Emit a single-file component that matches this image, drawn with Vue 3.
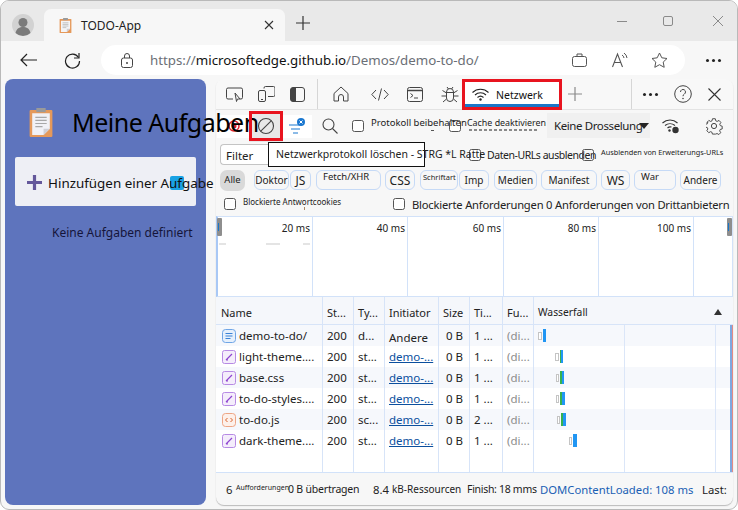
<script setup>
const chips = [
  { t: 'Doktor', w: 35, ml: 9 },
  { t: 'JS', w: 21, ml: 1, big: true },
  { t: 'Fetch/XHR', w: 65, ml: 5, top: true },
  { t: 'CSS', w: 30, ml: 4, big: true },
  { t: 'Schriftart', w: 38, ml: 5, top: true, tiny: true },
  { t: 'Imp', w: 30, ml: 1 },
  { t: 'Medien', w: 43, ml: 5 },
  { t: 'Manifest', w: 56, ml: 4 },
  { t: 'WS', w: 29, ml: 4, big: true },
  { t: 'War', w: 42, ml: 4, top: true },
  { t: 'Andere', w: 41, ml: 4 }
]
const ticks = [
  { t: '20 ms', w: 95 },
  { t: '40 ms', w: 95 },
  { t: '60 ms', w: 96 },
  { t: '80 ms', w: 95 },
  { t: '100 ms', w: 95 }
]
const rows = [
  { n: 'demo-to-do/', i: 'doc', ty: 'd...', init: 'Andere', ti: '1 ...', o: 4, b: 4, g: 1, gr: 0, bl: 3 },
  { n: 'light-theme....', i: 'css', ty: 'st...', init: 'demo-...', ti: '1 ...', o: 21, b: 4, g: 1, gr: 1, bl: 2 },
  { n: 'base.css', i: 'css', ty: 'st...', init: 'demo-...', ti: '1 ...', o: 22, b: 3, g: 1, gr: 2, bl: 2 },
  { n: 'to-do-styles....', i: 'css', ty: 'st...', init: 'demo-...', ti: '1 ...', o: 22, b: 3, g: 1, gr: 2, bl: 3 },
  { n: 'to-do.js', i: 'js', ty: 'sc...', init: 'demo-...', ti: '2 ...', o: 23, b: 3, g: 1, gr: 2, bl: 3 },
  { n: 'dark-theme....', i: 'css', ty: 'st...', init: 'demo-...', ti: '1 ...', o: 35, b: 3, g: 1, gr: 0, bl: 4 }
]
</script>

<template>
  <div class="window">
    <header class="titlebar">
      <div class="avatar">
        <svg width="22" height="22" viewBox="0 0 22 22"><circle cx="11" cy="11" r="11" fill="#d2d2d2"/><circle cx="11" cy="8.5" r="4.5" fill="#7b7b7b"/><path d="M3.5 19c1-4.5 4-6 7.5-6s6.500 1.500 7.500 6a11 11 0 0 1-15 0z" fill="#7b7b7b"/></svg>
      </div>
      <div class="tab">
        <svg class="tab-ico" width="13" height="15" viewBox="0 0 23 28"><rect x="0.500" y="2" width="22" height="26" rx="1" fill="#e5995a"/><path d="M3 5h17v15l-6 6H3z" fill="#f4f4f6"/><path d="M14 26v-6h6z" fill="#cfcfd6"/><rect x="7" y="0" width="9" height="4" fill="#9a9a9a"/><path d="M6 9h11M6 12h11M6 15h11M6 18h7" stroke="#a8a8a8" stroke-width="1.200"/></svg>
        <span class="tab-title">TODO-App</span>
        <svg class="tab-x" width="10" height="10" viewBox="0 0 10 10"><path d="M1 1l8 8M9 1l-8 8" stroke="#333" stroke-width="1.100"/></svg>
      </div>
      <svg class="newtab" width="14" height="14" viewBox="0 0 14 14"><path d="M7 0v14M0 7h14" stroke="#333" stroke-width="1.200"/></svg>
      <div class="winctl">
        <svg width="10" height="10" viewBox="0 0 10 10"><path d="M0 5.500h10" stroke="#8a8a8a"/></svg>
        <svg width="10" height="10" viewBox="0 0 10 10"><rect x="0.500" y="0.500" width="9" height="9" rx="1.500" fill="none" stroke="#8a8a8a"/></svg>
        <svg width="10" height="10" viewBox="0 0 10 10"><path d="M0 0l10 10M10 0L0 10" stroke="#8a8a8a"/></svg>
      </div>
    </header>

    <nav class="toolbar">
      <svg class="back" width="17" height="14" viewBox="0 0 17 14"><path d="M17 7H1M7 1L1 7l6 6" fill="none" stroke="#222" stroke-width="1.200"/></svg>
      <svg class="reload" width="17" height="17" viewBox="0 0 17 17"><path d="M14.500 5.500A7 7 0 1 0 15.500 9" fill="none" stroke="#222" stroke-width="1.200"/><path d="M15 1v5h-5" fill="none" stroke="#222" stroke-width="1.200"/></svg>
      <div class="address">
        <svg class="lock" width="12" height="15" viewBox="0 0 12 15"><rect x="0.500" y="5" width="11" height="9.500" rx="2" fill="none" stroke="#444"/><path d="M3.500 5V3a2.500 2.500 0 0 1 5 0v2" fill="none" stroke="#444"/><circle cx="6" cy="10" r="1" fill="#444"/></svg>
        <span class="url"><span class="dim">https://</span>microsoftedge.github.io<span class="dim">/Demos/demo-to-do/</span></span>
        <svg class="a1" width="15" height="14" viewBox="0 0 15 14"><rect x="0.500" y="3.500" width="14" height="10" rx="2" fill="none" stroke="#555"/><path d="M5 3.500V1h5v2.500" fill="none" stroke="#555"/></svg>
        <svg class="a2" width="17" height="16" viewBox="0 0 17 16"><path d="M0.500 15L5.500 2l5 13M2.500 10.500h6" fill="none" stroke="#555" stroke-width="1.100"/><path d="M10 3a4 4 0 0 1 2 3M12 1a7 7 0 0 1 3 5" fill="none" stroke="#555"/></svg>
        <svg class="a3" width="17" height="16" viewBox="0 0 17 16"><path d="M8.500 1l2.300 4.800 5.200.7-3.800 3.600 1 5.200-4.700-2.600-4.700 2.600 1-5.200L1 6.500l5.200-.7z" fill="none" stroke="#555"/></svg>
      </div>
      <div class="dots"><i></i><i></i><i></i></div>
    </nav>

    <main class="stage">
      <section class="app">
        <div class="app-head">
          <svg width="24" height="29" viewBox="0 0 23 28"><rect x="0.500" y="2" width="22" height="26" rx="1" fill="#e5995a"/><path d="M3 5h17v15l-6 6H3z" fill="#f1f1f6"/><path d="M14 26v-6h6z" fill="#cfcfd6"/><rect x="7" y="0" width="9" height="4" fill="#9a9a9a"/><path d="M6 9h11M6 12h11M6 15h11M6 18h7" stroke="#a8a8a8" stroke-width="1.100"/></svg>
          <h1>Meine Aufgaben</h1>
        </div>
        <div class="add">
          <svg width="15" height="15" viewBox="0 0 15 15"><path d="M7.500 0v15M0 7.500h15" stroke="#64589b" stroke-width="3.200"/></svg>
          <span class="add-text">Hinzufügen einer Aufgabe</span>
          <span class="add-sq"></span>
        </div>
        <p class="none">Keine Aufgaben definiert</p>
      </section>

      <section class="dev">
        <div class="tabs">
          <svg class="t1" width="17" height="15" viewBox="0 0 17 15"><path d="M7 12H2a1.500 1.500 0 0 1-1.500-1.500v-8A1.500 1.500 0 0 1 2 1h13a1.500 1.500 0 0 1 1.500 1.500v8A1.500 1.500 0 0 1 15 12h-1" fill="none" stroke="#444"/><path d="M9 6l5 6-2.500 0-1 2.500z" fill="none" stroke="#444"/></svg>
          <svg class="t2" width="17" height="16" viewBox="0 0 17 16"><path d="M6 2.500V2a1.500 1.500 0 0 1 1.500-1.500h8A1.500 1.500 0 0 1 17 2v7a1.500 1.500 0 0 1-1.500 1.500H10" fill="none" stroke="#444"/><rect x="0.500" y="4.500" width="7" height="11" rx="1.500" fill="none" stroke="#444"/><path d="M3 13.500h2" stroke="#444"/></svg>
          <svg class="t3" width="15" height="15" viewBox="0 0 15 15"><rect x="0.500" y="0.500" width="14" height="14" rx="2.500" fill="none" stroke="#444"/><path d="M3 0.500h3v14H3a2.500 2.500 0 0 1-2.500-2.500V3A2.500 2.500 0 0 1 3 0.500z" fill="#444"/></svg>
          <span class="vsep s1"></span>
          <svg class="t4" width="16" height="16" viewBox="0 0 16 16"><path d="M1 7.500L8 1l7 6.500V15h-4.500v-4a2.500 2.500 0 0 0-5 0v4H1z" fill="none" stroke="#444" stroke-linejoin="round"/></svg>
          <svg class="t5" width="18" height="13" viewBox="0 0 18 13"><path d="M5 2L0.800 6.500 5 11M13 2l4.200 4.500L13 11M10.500 0.500l-3 12" fill="none" stroke="#444"/></svg>
          <svg class="t6" width="16" height="15" viewBox="0 0 16 15"><rect x="0.500" y="0.500" width="15" height="14" rx="2" fill="none" stroke="#444"/><path d="M0.500 3.500h15" stroke="#444" stroke-width="1.500"/><path d="M3.500 6.500l2.500 2-2.500 2M7 11h4" fill="none" stroke="#444"/></svg>
          <svg class="t7" width="18" height="17" viewBox="0 0 18 17"><path d="M5.500 6a3.500 3.500 0 0 1 7 0v6a3.500 3.500 0 0 1-7 0zM6 1l1.500 2M12 1l-1.500 2M5.500 7L1.500 4.500M12.500 7l4-2.500M5.500 10H0.500M12.500 10h5M5.500 13l-3.500 3M12.500 13l3.500 3M5.500 6.500h7" fill="none" stroke="#444"/></svg>
          <div class="net-tab">
            <svg width="17" height="13" viewBox="0 0 17 13"><path d="M0.500 4.500a11.500 11.500 0 0 1 16 0M3 7a8 8 0 0 1 11 0M5.500 9.500a4.500 4.500 0 0 1 6 0" fill="none" stroke="#222" stroke-width="1.100"/><circle cx="8.500" cy="11.500" r="1.200" fill="#222"/></svg>
            <span>Netzwerk</span>
          </div>
          <svg class="t8" width="14" height="14" viewBox="0 0 14 14"><path d="M7 0v14M0 7h14" stroke="#8a8a8a" stroke-width="1.200"/></svg>
          <span class="vsep s2"></span>
          <div class="dots small"><i></i><i></i><i></i></div>
          <svg class="t9" width="18" height="18" viewBox="0 0 18 18"><circle cx="9" cy="9" r="8.300" fill="none" stroke="#444"/><path d="M6.500 7a2.500 2.500 0 1 1 3.800 2.100c-.9.600-1.300 1-1.300 2.100" fill="none" stroke="#444"/><circle cx="9" cy="13.500" r=".8" fill="#444"/></svg>
          <svg class="t10" width="13" height="13" viewBox="0 0 13 13"><path d="M0.500 0.500l12 12M12.500 0.500l-12 12" stroke="#333" stroke-width="1.100"/></svg>
        </div>

        <div class="tools">
          <div class="tool-white">
            <svg class="rec" width="12" height="12" viewBox="0 0 12 12"><circle cx="6" cy="6" r="5" fill="#fff" stroke="#e0232e" stroke-width="1.500"/><circle cx="6" cy="6" r="2.500" fill="#e0232e"/></svg>
            <div class="clear">
              <svg width="18" height="18" viewBox="0 0 18 18"><circle cx="9" cy="9" r="7.500" fill="none" stroke="#444" stroke-width="1.100"/><path d="M3.800 14.200L14.200 3.800" stroke="#444" stroke-width="1.100"/></svg>
            </div>
            <svg class="filt" width="20" height="17" viewBox="0 0 20 17"><path d="M1 7h13M3 11h9M5 15h5" stroke="#1b78d0" stroke-width="1.200"/><circle cx="13" cy="4" r="4" fill="#1b78d0"/><path d="M11.500 2.500l3 3M14.500 2.500l-3 3" stroke="#fff"/></svg>
          </div>
          <svg class="srch" width="16" height="16" viewBox="0 0 16 16"><circle cx="6.500" cy="6.500" r="5.500" fill="none" stroke="#444" stroke-width="1.100"/><path d="M10.500 10.500L15.500 15.500" stroke="#444" stroke-width="1.100"/></svg>
          <span class="cb c1"></span>
          <span class="mini lab1">Protokoll beibehalten<i class="tickmark"></i></span>
          <span class="cb c2"></span>
          <span class="lab2"><b>Cache deaktivieren</b></span>
          <div class="throttle"><span>Keine Drosselung</span><i class="caret"></i></div>
          <svg class="wset" width="18" height="16" viewBox="0 0 18 16"><path d="M0.500 5a11 11 0 0 1 15 0M3 7.500a8 8 0 0 1 10 0M5.500 10a4.500 4.500 0 0 1 4 -1" fill="none" stroke="#333" stroke-width="1.100"/><circle cx="7.500" cy="12.500" r="1.200" fill="#333"/><circle cx="13.500" cy="12" r="3.200" fill="#333"/></svg>
          <svg class="gear" width="17" height="17" viewBox="0 0 17 17"><path d="M7 .8h3l.5 2.200 1.500.7 2-1.100 2 2.200-1.200 1.900.6 1.500 2 .6v3l-2.100.5-.6 1.500 1.100 2-2 2-1.900-1.100-1.500.6-.5 0h-3l-.5-2-1.500-.6-1.900 1.100-2.100-2.100 1.100-1.900-.6-1.500-2.100-.5v-3l2.100-.6.600-1.500L1 4.800l2.100-2.200 1.900 1.100 1.500-.7z" transform="scale(.93)" fill="none" stroke="#444"/><circle cx="8" cy="8" r="2.600" fill="none" stroke="#444"/></svg>
        </div>

        <div class="filters">
          <div class="finput">Filter</div>
          <span class="cb c3"></span>
          <span class="lab3">Daten-URLs ausblenden</span>
          <span class="cb c4"></span>
          <span class="lab4">Ausblenden von Erweiterungs-URLs</span>
        </div>

        <div class="chips">
          <span class="all">Alle</span>
          <span
            v-for="c in chips"
            :key="c.t"
            class="chip"
            :class="{ big: c.big, top: c.top, tiny: c.tiny }"
            :style="{ width: c.w + 'px', marginLeft: c.ml + 'px' }"
          >{{ c.t }}</span>
        </div>

        <div class="blocks">
          <span class="cb c5"></span>
          <span class="lab5">Blockierte Antwortcookies<i class="tickmark t-b"></i></span>
          <span class="cb c6"></span>
          <span class="lab6">Blockierte Anforderungen 0 Anforderungen von Drittanbietern</span>
        </div>

        <div class="overview">
          <div v-for="t in ticks" :key="t.t" class="tick" :style="{ width: t.w + 'px' }">{{ t.t }}</div>
          <span class="handle hl"></span>
          <span class="handle hr"></span>
          <span class="dash d1"></span>
          <span class="dash d2"></span>
          <span class="dash d3"></span>
        </div>

        <div class="table">
          <div class="grid head">
            <div>Name</div><div>St...</div><div>Ty...</div><div>Initiator</div><div>Size</div><div>Ti...</div><div>Fu...</div>
            <div class="wfh"><span>Wasserfall</span><i class="up"></i></div>
          </div>
          <div class="grid row" v-for="(r, i) in rows" :key="r.n" :class="{ odd: i % 2 === 0 }">
            <div class="namecell">
              <svg v-if="r.i === 'doc'" width="14" height="14" viewBox="0 0 14 14"><rect x="0.500" y="0.500" width="13" height="13" rx="3" fill="#e6f0fc" stroke="#6fa5e6"/><path d="M3.500 4.500h7M3.500 7h7M3.500 9.500h5" stroke="#3b82d6"/></svg>
              <svg v-else-if="r.i === 'css'" width="14" height="14" viewBox="0 0 14 14"><rect x="0.500" y="0.500" width="13" height="13" rx="2" fill="#f4edfb" stroke="#b78ae4"/><path d="M4 10L10 4M4 10h2" stroke="#8e44d0" stroke-width="1.200"/></svg>
              <svg v-else width="14" height="14" viewBox="0 0 14 14"><rect x="0.500" y="0.500" width="13" height="13" rx="3" fill="#fdf0ea" stroke="#eda585"/><path d="M5.500 5L3.500 7l2 2M8.500 5l2 2-2 2" fill="none" stroke="#d9622b"/></svg>
              <span>{{ r.n }}</span>
            </div>
            <div>200</div>
            <div>{{ r.ty }}</div>
            <div :class="r.init === 'Andere' ? 'other' : 'link'">{{ r.init }}</div>
            <div class="size">0 B</div>
            <div>{{ r.ti }}</div>
            <div class="gray">(di...</div>
            <div class="wf" :style="{ paddingLeft: r.o + 'px' }">
              <i class="b-box" :style="{ width: r.b + 'px' }"></i>
              <i class="b-gap" :style="{ width: r.g + 'px' }"></i>
              <i class="b-green" :style="{ width: r.gr + 'px' }"></i>
              <i class="b-blue" :style="{ width: r.bl + 'px' }"></i>
            </div>
          </div>
          <div class="grid filler">
            <div></div><div></div><div></div><div></div><div></div><div></div><div></div><div class="wf"></div>
          </div>
          <span class="edge"></span>
        </div>

        <footer class="status">
          <span class="s-6">6</span>
          <span class="s-auf">Aufforderungen</span>
          <span class="s-b">0 B übertragen</span>
          <span class="s-84">8.4</span>
          <span class="s-kb">kB-Ressourcen</span>
          <span class="s-fin">Finish: 18 mms</span>
          <span class="s-dom">DOMContentLoaded: 108 ms</span>
          <span class="s-last">Last:</span>
        </footer>

        <div class="tooltip">Netzwerkprotokoll löschen - STRG *L Ratte</div>
        <span class="redbox"></span>
      </section>
    </main>
  </div>
</template>

<style scoped>
* { box-sizing: border-box; }
svg { flex: none; }
.window {
  width: 738px; height: 510px; position: relative; overflow: hidden;
  display: flex; flex-direction: column;
  background: #f7f7f7; border: 1px solid #b9b9b9; border-radius: 9px;
  font-family: "Noto Sans", "Liberation Sans", sans-serif; color: #1b1b1b;
}
.titlebar { height: 40px; flex: none; background: #e9e9e9; display: flex; align-items: flex-end; position: relative; }
.avatar { position: absolute; left: 11px; top: 13px; width: 22px; height: 22px; }
.tab {
  margin-left: 43px; width: 241px; height: 32px; background: #f7f7f7;
  border-radius: 7px 7px 0 0; display: flex; align-items: center;
}
.tab-ico { margin-left: 15px; }
.tab-title { margin-left: 9px; font-size: 12px; color: #222; }
.tab-x { margin-left: auto; margin-right: 11px; }
.newtab { margin: 0 0 11px 11px; }
.winctl { margin-left: auto; display: flex; gap: 36px; padding-right: 14px; height: 100%; align-items: center; margin-top: -12px; }
.winctl svg + svg + svg { margin-left: 4px; }

.toolbar { height: 38px; flex: none; display: flex; align-items: center; }
.back { margin-left: 19px; }
.reload { margin-left: 27px; }
.address {
  margin-left: 20px; width: 584px; height: 30px; border-radius: 15px; background: #fff;
  display: flex; align-items: center;
}
.lock { margin-left: 20px; }
.url { font-size: 13.300px; color: #111; white-space: nowrap; width: 340px; flex: none; margin-left: 17px; }
.dim { color: #6b6f76; }
.a1 { margin-left: 82px; }
.a2 { margin-left: 25px; }
.a3 { margin-left: 22px; }
.dots { display: flex; gap: 3px; margin-left: 21px; }
.dots i { width: 3px; height: 3px; border-radius: 50%; background: #222; }

.stage { flex: 1; display: flex; gap: 10px; padding: 0 4px 4px 4px; min-height: 0; }
.app {
  width: 201px; flex: none; background: #5e74bd; border-radius: 8px; position: relative; z-index: 3;
  padding: 28px 10px 0;
}
.app-head { display: flex; align-items: center; height: 30px; padding-left: 14px; white-space: nowrap; }
.app-head h1 { margin: 0 0 0 19px; font-size: 25px; font-weight: 400; color: #000; letter-spacing: -0.5px; }
.add {
  margin-top: 20px; height: 49px; background: #eeeff5; border-radius: 2px; position: relative;
  display: flex; align-items: center; padding: 2px 0 0 12px; white-space: nowrap;
}
.add-text { margin-left: 6px; font-size: 13.400px; color: #111; position: relative; z-index: 1; }
.add-sq { position: absolute; left: 155px; top: 19px; width: 14px; height: 14px; background: #19a2e4; border-radius: 2px; }
.none { margin: 18px 0 0 37px; font-size: 12px; color: #15153a; white-space: nowrap; }

.dev { width: 517px; flex: none; background: #f7f7f7; border-radius: 8px; position: relative; display: flex; flex-direction: column; box-shadow: 0 1px 1px #bbb; }
.tabs { height: 31px; flex: none; display: flex; align-items: center; border-bottom: 1px solid #e3e3e3; position: relative; background: #f8f8f8; border-radius: 8px 8px 0 0; }
.t1 { margin-left: 10px; }
.t2 { margin-left: 15px; }
.t3 { margin-left: 15px; }
.vsep { width: 1px; height: 100%; background: #d6d6d6; }
.s1 { margin-left: 12px; }
.t4 { margin-left: 15px; }
.t5 { margin-left: 22px; }
.t6 { margin-left: 18px; }
.t7 { margin-left: 18px; }
.net-tab {
  margin-left: 3px; width: 100px; height: 31px; flex: none; background: #fff;
  display: flex; align-items: center; padding: 1px 0 0 7px; position: relative;
  border: 3px solid #e8141f;
}
.net-tab span { margin-left: 7px; font-size: 10.500px; color: #111; }
.net-tab::after { content: ""; position: absolute; left: 0; right: 0; bottom: 0; height: 3px; background: #1b76c8; }
.t8 { margin-left: 6px; }
.s2 { margin-left: 49px; }
.dots.small { margin-left: 11px; }
.t9 { margin-left: 16px; }
.t10 { margin-left: 16px; }

.tools { height: 32px; flex: none; display: flex; align-items: center; position: relative; }
.tool-white { margin-left: 1px; width: 95px; height: 23px; background: #fff; display: flex; align-items: center; flex: none; }
.rec { margin-left: 11px; }
.clear { margin-left: 9px; width: 34px; height: 31px; flex: none; background: #e8e8e8; display: flex; align-items: center; justify-content: center; }
.filt { margin-left: 5px; }
.srch { margin-left: 10px; }
.cb { display: block; flex: none; width: 12px; height: 12px; border: 1px solid #555; border-radius: 2.500px; background: #fff; }
.c1 { margin-left: 14px; }
.mini { font-size: 9.500px; white-space: nowrap; }
.lab1 { margin-left: 7px; width: 78px; margin-top: -7px; position: relative; color: #222; }
.tickmark { position: absolute; left: 60px; top: 14px; width: 3px; height: 1px; background: #555; }
.c2 { margin-left: 0; }
.lab2 { margin-left: 6px; width: 80px; height: 20px; position: relative; font-size: 8.900px; white-space: nowrap; flex: none; }
.lab2::after { content: ""; position: absolute; left: 2px; right: 8px; top: 13px; height: 2px; background: repeating-linear-gradient(90deg, #8a8a8a 0 3px, transparent 3px 5px); }
.lab2 b { font-weight: 400; display: block; line-height: 13px; color: #222; }
.throttle { width: 103px; height: 25px; background: #f0f0f0; display: flex; align-items: center; padding-left: 7px; position: relative; flex: none; white-space: nowrap; font-size: 11.500px; letter-spacing: -0.400px; color: #222; margin-top: -1px; }
.caret { position: absolute; left: 92px; top: 10px; width: 0; height: 0; border-left: 5px solid transparent; border-right: 5px solid transparent; border-top: 6px solid #222; }
.wset { margin-left: 12px; }
.gear { margin-left: 26px; }

.filters { height: 25px; flex: none; display: flex; align-items: center; position: relative; white-space: nowrap; }
.finput { margin-left: 4px; width: 60px; height: 21px; background: #fff; border: 1px solid #c4c4c4; border-radius: 4px 0 0 4px; border-right: 0; font-size: 11.500px; padding-left: 5px; line-height: 21px; color: #222; flex: none; }
.c3 { margin-left: 189px; }
.lab3 { margin-left: 6px; font-size: 10.500px; letter-spacing: -0.450px; width: 95px; flex: none; color: #222; }
.c4 { margin-left: 0; position: relative; background: transparent; }
.lab4 { margin-left: 7px; font-size: 7.300px; margin-top: -5px; color: #222; }

.chips { height: 25px; flex: none; display: flex; align-items: flex-start; padding-top: 3px; white-space: nowrap; }
.all { margin-left: 4px; width: 25px; height: 21px; background: #d9d9d9; border-radius: 7px; font-size: 9.500px; text-align: center; line-height: 20px; color: #222; flex: none; }
.chip { height: 20px; border: 1px solid #c6daf6; border-radius: 6px; font-size: 10px; text-align: center; line-height: 18px; flex: none; color: #222; overflow: hidden; }
.chip.big { font-size: 12px; line-height: 20px; }
.chip.top { line-height: 12px; font-size: 9.500px; text-align: left; padding-left: 6px; }
.chip.tiny { font-size: 7.500px; padding-left: 2px; }

.blocks { height: 24px; flex: none; display: flex; align-items: center; white-space: nowrap; }
.c5 { margin-left: 8px; }
.lab5 { margin-left: 7px; width: 150px; flex: none; font-size: 8px; margin-top: -5px; position: relative; color: #222; }
.t-b { left: 61px; top: 11px; width: 1px; height: 3px; background: #a86; }
.c6 { margin-left: 0; }
.lab6 { margin-left: 7px; font-size: 11.200px; letter-spacing: -0.200px; color: #222; }

.overview { height: 81px; flex: none; background: #fff; border: 1px solid #d2e2f9; border-left: 2px solid #a9c8f5; display: flex; position: relative; }
.tick { height: 100%; border-right: 1px solid #d2e2f9; text-align: right; padding: 4px 2px 0 0; font-size: 10px; color: #222; flex: none; white-space: nowrap; }
.handle { position: absolute; top: 1px; width: 5px; height: 18px; background: #8e8e8e; border-radius: 1px; }
.handle::after { content: ""; position: absolute; left: 1px; top: 5px; width: 1px; height: 8px; background: #1b76c8; }
.hl { left: -1px; }
.hr { right: 0; }
.dash { position: absolute; top: 26px; height: 2px; background: #e4e4e4; }
.d1 { left: 1px; width: 7px; }
.d2 { left: 48px; width: 14px; }
.d3 { left: 85px; width: 7px; }

.table { flex: 1; min-height: 0; display: flex; flex-direction: column; position: relative; background: #fff; border-bottom: 1px solid #d2e2f9; }
.grid { display: grid; grid-template-columns: 107px 31px 31px 54px 31px 33px 31px 1fr; font-size: 11.500px; }
.grid > div { border-right: 1px solid #d7e4f8; padding-left: 4px; white-space: nowrap; overflow: hidden; display: flex; align-items: center; color: #222; }
.grid > div:last-child { border-right: 0; }
.head { height: 28px; flex: none; background: #f5f7fb; border-bottom: 1px solid #d7e4f8; font-size: 11px; }
.head > div { padding-top: 3px; }
.head > div:first-child { padding-left: 5px; }
.wfh { justify-content: space-between; padding-right: 11px; font-size: 10.300px; }
.up { width: 0; height: 0; border-left: 4px solid transparent; border-right: 4px solid transparent; border-bottom: 6px solid #333; }
.row { height: 21px; flex: none; }
.row.odd { background: #f6f8fc; }
.namecell { gap: 3px; padding-left: 6px !important; }
.other { padding-top: 3px; }
.link { color: #0b4f9e !important; text-decoration: underline; }
.size { justify-content: flex-end; padding-right: 6px; }
.gray { color: #8c8c8c !important; }
.wf {
  align-items: center;
  background-image: linear-gradient(#dbe6f8, #dbe6f8), linear-gradient(#dbe6f8, #dbe6f8);
  background-size: 1px 100%, 1px 100%; background-repeat: no-repeat; background-position: 90px 0, 181px 0;
}
.wf i { display: block; height: 13px; flex: none; }
.b-box { height: 8px !important; background: #fff; border: 1px solid #c4c4c4; }
.b-green { background: #37b24d; }
.b-blue { background: #2196f3; }
.filler { flex: 1; }
.edge { position: absolute; right: 0; top: 28px; bottom: 0; width: 3px; background: linear-gradient(90deg, #7fa8e0 66%, #e58a86 66%); }

.status { height: 32px; flex: none; display: flex; align-items: center; white-space: nowrap; font-size: 11.300px; color: #222; }
.s-6 { margin-left: 10px; width: 10px; }
.s-auf { font-size: 7px; width: 52px; margin-top: -3px; }
.s-b { width: 85px; font-size: 10.500px; letter-spacing: -0.200px; }
.s-84 { width: 19px; }
.s-kb { width: 75px; font-size: 10px; }
.s-fin { width: 73px; font-size: 10.500px; letter-spacing: -0.300px; }
.s-dom { width: 162px; color: #1a5fb4; }

.tooltip {
  position: absolute; left: 52px; top: 63px; width: 157px; height: 25px; z-index: 6;
  background: #fff; border: 1px solid #111; font-size: 10.500px; line-height: 23px; padding-left: 7px; white-space: nowrap; color: #222;
}
.redbox { position: absolute; left: 33px; top: 32px; width: 34px; height: 30px; border: 3px solid #e8141f; z-index: 5; }
</style>
